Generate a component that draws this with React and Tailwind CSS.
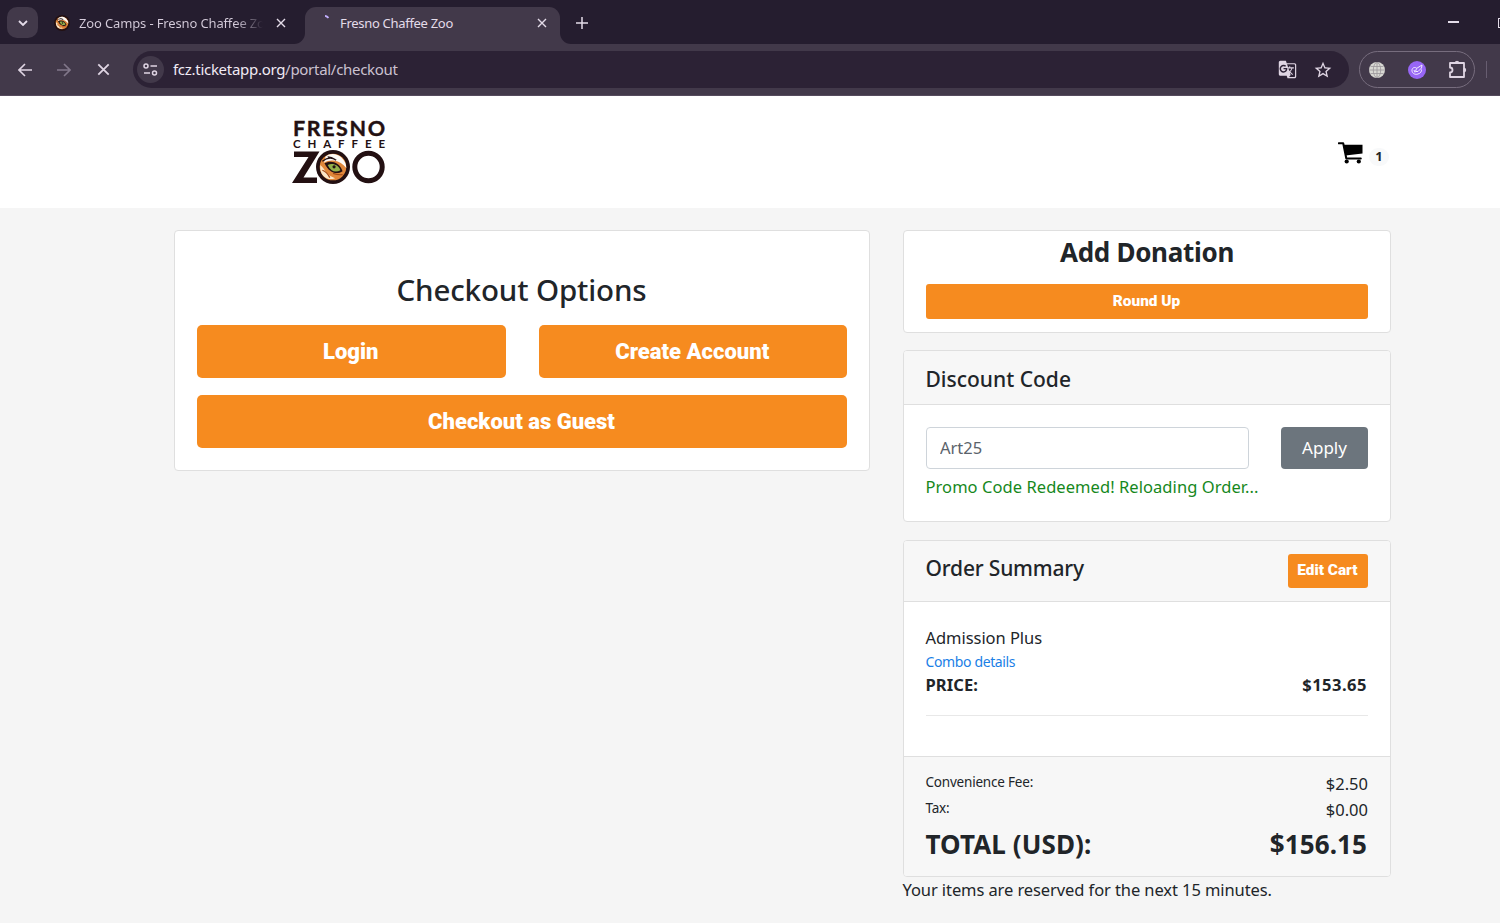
import { useState } from 'react';
import { MdGTranslate, MdStarBorder } from 'react-icons/md';

const FEES = [
  { label: 'Convenience Fee:', amount: '$2.50' },
  { label: 'Tax:', amount: '$0.00' },
];

function CloseIcon({ className }) {
  return (
    <svg className={className} viewBox="0 0 10 10" fill="none" stroke="currentColor" strokeWidth="1.4">
      <path d="M1 1l8 8M9 1L1 9" />
    </svg>
  );
}

function CartIcon({ className }) {
  return (
    <svg className={className} viewBox="0 0 25 22">
      <path d="M.8 1.200h4.400L8.300 16.500h14.500" fill="none" stroke="currentColor" strokeWidth="2" strokeLinecap="round" strokeLinejoin="round" />
      <path d="M5.500 2.700h19v8.800L7.500 13.500z" fill="currentColor" />
      <circle cx="8.700" cy="19.500" r="2.100" fill="currentColor" />
      <circle cx="20.800" cy="19.500" r="2.100" fill="currentColor" />
    </svg>
  );
}

function TigerEye({ className }) {
  return (
    <svg className={className} viewBox="0 0 32 32">
      <circle cx="16" cy="16" r="16" fill="#231012" />
      <circle cx="16" cy="16" r="12.500" fill="#e0873a" />
      <path d="M9 6C13 2.500 20 3 24 7c3 3 4.500 6 4.500 10-3-4-7-6.500-11-7-4-.5-7 0-10 2z" fill="#fdfaf6" />
      <path d="M6 10.500c4-3 9-3.500 13-1M11 6.500c3 0 5 1 7 2.500" fill="none" stroke="#231012" strokeWidth="1.200" />
      <path d="M4 14c2 2 4 4 5.500 7 2 3 5 4 8.500 5.500-7 3-15-2-14-12.500z" fill="#fae6c8" />
      <path d="M8 12.500c5-3 14-2 17 7.500-6 4-13 1-17-7.500z" fill="#231012" />
      <path d="M11 14c5-2 10 0 12 5-5 2.500-9 1-12-5z" fill="#93b14a" />
      <circle cx="17" cy="15.800" r="1.500" fill="#231012" />
      <path d="M6 19c3 1 5 3 7 7M25 23c-3 1-6 0-9-1" fill="none" stroke="#a34a17" strokeWidth="1.100" />
    </svg>
  );
}

function TabStrip() {
  return (
    <div className="flex h-11 bg-[#251d2f] text-[13px] text-[#e4dce9]">
      <button className="ml-[7px] mt-[7px] flex h-[31px] w-[31px] items-center justify-center rounded-[10px] bg-[#42394a]">
        <svg className="h-[6px] w-[10px]" viewBox="0 0 10 6" fill="none" stroke="currentColor" strokeWidth="1.800">
          <path d="M1 1l4 4 4-4" />
        </svg>
      </button>
      <div className="flex w-[267px] items-center pt-px pl-[16px]">
        <TigerEye className="h-4 w-4" />
        <span className="mt-[2px] ml-[9px] w-[184px] overflow-hidden bg-gradient-to-r from-[#d6cddc] from-85% to-transparent bg-clip-text whitespace-nowrap text-transparent tracking-[-0.14px]">
          Zoo Camps - Fresno Chaffee Zoo
        </span>
        <CloseIcon className="ml-[13px] h-[10px] w-[10px]" />
      </div>
      <div className="relative mt-[7px] flex h-[37px] w-[255px] items-center rounded-t-[11px] bg-[#42394a] pb-[5px]">
        <svg className="absolute bottom-0 -left-[11px] h-[11px] w-[11px]" viewBox="0 0 11 11">
          <path d="M11 0v11H0A11 11 0 0 0 11 0z" fill="#42394a" />
        </svg>
        <svg className="absolute -right-[11px] bottom-0 h-[11px] w-[11px]" viewBox="0 0 11 11">
          <path d="M0 0v11h11A11 11 0 0 1 0 0z" fill="#42394a" />
        </svg>
        <svg className="ml-[20px] h-4 w-[15px]" viewBox="0 0 15 16" fill="none">
          <path d="M0 .8q2 .5 3.500 2" stroke="#c3b0ff" strokeWidth="1.800" />
        </svg>
        <span className="mt-[2px] w-[197px] whitespace-nowrap tracking-[-0.3px]">Fresno Chaffee Zoo</span>
        <CloseIcon className="h-[10px] w-[10px]" />
      </div>
      <svg className="ml-[16px] mt-[17px] h-[12px] w-[12px]" viewBox="0 0 12 12" stroke="currentColor" strokeWidth="1.500">
        <path d="M6 0v12M0 6h12" />
      </svg>
      <div className="ml-auto flex pt-[18px]">
        <div className="mt-[3px] mr-[39px] h-[1.500px] w-[11px] bg-[#e4dce9]" />
        <div className="h-[10px] w-[2px] border-y border-l border-[#e4dce9]" />
      </div>
    </div>
  );
}

function Toolbar() {
  return (
    <div className="flex h-[52px] items-center border-b border-[#554b5d] bg-[#42394a] text-[#dfd5e3]">
      <svg className="ml-[18px] h-[14px] w-[14px]" viewBox="0 0 14 14" fill="none" stroke="currentColor" strokeWidth="1.600">
        <path d="M14 7H1.200M7 1L1 7l6 6" />
      </svg>
      <svg className="ml-[25px] h-[14px] w-[14px] text-[#81778a]" viewBox="0 0 14 14" fill="none" stroke="currentColor" strokeWidth="1.600">
        <path d="M0 7h12.800M7 1l6 6-6 6" />
      </svg>
      <CloseIcon className="ml-[26px] h-[13px] w-[13px]" />
      <div className="ml-[23px] flex h-[37px] w-[1216px] items-center rounded-full bg-[#2c2235] pl-[4px] pr-[16px]">
        <span className="flex h-[27px] w-[27px] items-center justify-center rounded-full bg-[#42394a]">
          <svg className="h-[13px] w-[15px]" viewBox="0 0 15 13" fill="none" stroke="currentColor" strokeWidth="1.500">
            <circle cx="3" cy="3" r="2" />
            <circle cx="11.500" cy="10" r="2" />
            <path d="M7.500 3H14M1 10h6" />
          </svg>
        </span>
        <span className="ml-[9px] text-[15px] tracking-[-0.29px] text-[#cbc1d0]">
          <span className="text-[#f1eaf4]">fcz.ticketapp.org</span>/portal/checkout
        </span>
        <MdGTranslate className="mr-[16px] ml-auto h-[19px] w-[19px]" />
        <MdStarBorder className="h-[20px] w-[20px]" />
      </div>
      <div className="ml-[10px] flex h-[37px] w-[116px] items-center rounded-full border border-[#776d7e] pl-[9px]">
        <svg className="h-4 w-4" viewBox="0 0 16 16" fill="none" stroke="#9a959b" strokeWidth=".8">
          <circle cx="8" cy="8" r="8" fill="#d8d8d3" stroke="none" />
          <ellipse cx="8" cy="8" rx="3.700" ry="7.500" />
          <path d="M8 0v16M0 8h16M1.500 4.500h13M1.500 11.500h13" />
        </svg>
        <svg className="ml-[23px] h-[18px] w-[18px]" viewBox="0 0 18 18" fill="none" stroke="#f1eaff" strokeWidth="1">
          <circle cx="9" cy="9" r="9" fill="#9766f5" stroke="none" />
          <path d="M8.500 7C6 5.500 3.500 7.500 4 10s3 4 6 3 3.500-2.500 3.500-4.500M7.500 10.500l1-3 5.500-3.500-.5 3-3.500 3.500zM6 9l1 2.500" />
        </svg>
        <svg className="ml-[22px] h-[19px] w-[19px]" viewBox="0 0 19 19" fill="none" stroke="currentColor" strokeWidth="1.800" strokeLinejoin="round">
          <path d="M2 3h14v14H2v-4.500a2.500 2.500 0 0 0 0-5z" />
          <path d="M7 3a2 1.700 0 0 1 4 0zM16 8a1.700 2 0 0 1 0 4z" fill="currentColor" strokeWidth="1" />
        </svg>
      </div>
      <div className="ml-[11px] h-[17px] w-px bg-[#675d70]" />
    </div>
  );
}

function ZooLogo() {
  return (
    <div className="relative h-[76px] w-[94px]">
      <svg className="h-[76px] w-[94px] font-['Lato'] font-bold" viewBox="0 -8 94 76" fill="#231012">
        <text x="1" y="16.300" fontSize="21.500" textLength="92" lengthAdjust="spacing" stroke="#231012" strokeWidth=".4">FRESNO</text>
        <text x="1" y="28" fontSize="11.500" textLength="92" lengthAdjust="spacing">CHAFFEE</text>
        <path d="M2 31.500h25.500L11.500 57.500H25v5.500H0L16.500 37H2z" />
        <circle cx="76.500" cy="47" r="13.700" fill="none" stroke="#231012" strokeWidth="5" />
      </svg>
      <TigerEye className="absolute top-[38px] left-[24px] h-[34px] w-[34px]" />
    </div>
  );
}

function OrangeButton({ className, children }) {
  return (
    <button className={`bg-[#f68b1f] font-['Roboto'] font-black text-white ${className}`}>
      {children}
    </button>
  );
}

function Card({ className = '', children }) {
  return (
    <section className={`overflow-hidden rounded-[4px] border border-[#dfdfdf] bg-white ${className}`}>
      {children}
    </section>
  );
}

function CheckoutOptions() {
  return (
    <Card className="h-[241px] w-[696px] px-[22px] pt-[38px]">
      <h2 className="-ml-px text-center text-[29.500px] leading-[42px] font-medium tracking-[-0.14px]">Checkout Options</h2>
      <div className="mt-[14px] grid grid-cols-2 gap-x-[33px] gap-y-[17px] text-[22px]">
        <OrangeButton className="h-[53px] rounded-[5px] pr-px">Login</OrangeButton>
        <OrangeButton className="h-[53px] rounded-[5px] pr-px">Create Account</OrangeButton>
        <OrangeButton className="col-span-2 h-[53px] rounded-[5px] pr-px">Checkout as Guest</OrangeButton>
      </div>
    </Card>
  );
}

function DiscountCode() {
  const [code, setCode] = useState('Art25');

  return (
    <Card className="mt-[17px] h-[172px]">
      <h3 className="h-[54px] border-b border-[#dfdfdf] bg-[#f7f7f7] pl-[21.500px] text-[21px] leading-[56px] font-medium">
        Discount Code
      </h3>
      <div className="px-[22px] pt-[22px]">
        <div className="flex justify-between">
          <input
            className="h-[42px] w-[323px] rounded-[4px] border border-[#ced4da] px-[13px] pb-px text-[16.500px] text-[#5b636b] outline-none"
            onChange={(event) => setCode(event.target.value)}
            value={code}
          />
          <button className="h-[42px] w-[87px] rounded-[4px] bg-[#6c757d] text-[17px] text-white">Apply</button>
        </div>
        <p className="-ml-[0.500px] mt-[5px] text-[16.500px] leading-[26px] tracking-[0.06px] text-[#16881c]">Promo Code Redeemed! Reloading Order...</p>
      </div>
    </Card>
  );
}

function OrderSummary() {
  return (
    <Card className="mt-[18px] h-[337px]">
      <div className="flex h-[61px] justify-between border-b border-[#dfdfdf] bg-[#f7f7f7] pr-[22px] pl-[21.500px] pt-[13px]">
        <h3 className="text-[21px] leading-[29px] font-medium tracking-[-0.18px]">Order Summary</h3>
        <OrangeButton className="h-[34px] w-[80px] rounded-[3px] pr-px text-[15.400px]">Edit Cart</OrangeButton>
      </div>
      <div className="h-[154px] px-[22px] pt-[23px]">
        <p className="-ml-[0.500px] text-[16.500px] leading-[26px] tracking-[-0.05px]">Admission Plus</p>
        <a className="-ml-[0.500px] block text-[14px] leading-[22px] tracking-[-0.37px] text-[#1a80e6]">Combo details</a>
        <div className="flex justify-between text-[16.500px] leading-[24px] font-bold">
          <span className="-ml-[0.500px] tracking-[0.1px]">PRICE:</span>
          <span className="mr-px tracking-[0.5px]">$153.65</span>
        </div>
        <hr className="mt-[18px] border-[#e8e8e8]" />
      </div>
      <div className="h-[120px] border-t border-[#dfdfdf] bg-[#f7f7f7] px-[22px] pt-[13px]">
        {FEES.map((fee) => (
          <div className="flex h-[26px] justify-between" key={fee.label}>
            <span className="-ml-[0.500px] text-[13.500px] leading-[24px] tracking-[-0.2px]">{fee.label}</span>
            <span className="text-[16.500px] leading-[28px]">{fee.amount}</span>
          </div>
        ))}
        <div className="mt-px flex justify-between text-[26px] leading-[42px] font-bold">
          <span className="-ml-[0.500px] tracking-[0.1px]">TOTAL (USD):</span>
          <span className="mr-px tracking-[0.1px]">$156.15</span>
        </div>
      </div>
    </Card>
  );
}

export default function App() {
  return (
    <div className="h-[923px] w-[1500px] overflow-hidden bg-[#f5f5f5] font-['Noto_Sans',sans-serif] text-[#212529]">
      <TabStrip />
      <Toolbar />
      <header className="flex h-[112px] justify-between bg-white pt-[16px] pr-[111px] pl-[292px]">
        <ZooLogo />
        <div className="flex pt-[30px]">
          <CartIcon className="h-[22px] w-[25px] text-black" />
          <span className="mt-[6px] ml-[6px] flex h-[18px] w-[20px] items-center justify-center rounded-full bg-[#f8f9fa] text-[13px] font-bold">
            1
          </span>
        </div>
      </header>
      <main className="flex items-start gap-[33px] pt-[22px] pl-[174px]">
        <CheckoutOptions />
        <aside className="w-[488px]">
          <Card className="h-[103px] px-[22px]">
            <h2 className="mt-px text-center text-[26px] leading-[40px] font-bold tracking-[-0.3px]">Add Donation</h2>
            <OrangeButton className="mt-[12px] block h-[35px] w-full rounded-[3px] pr-px text-[15.400px]">Round Up</OrangeButton>
          </Card>
          <DiscountCode />
          <OrderSummary />
          <p className="-mt-px -ml-[0.500px] text-[16.500px] leading-[27px] tracking-[-0.09px]">Your items are reserved for the next 15 minutes.</p>
        </aside>
      </main>
    </div>
  );
}
